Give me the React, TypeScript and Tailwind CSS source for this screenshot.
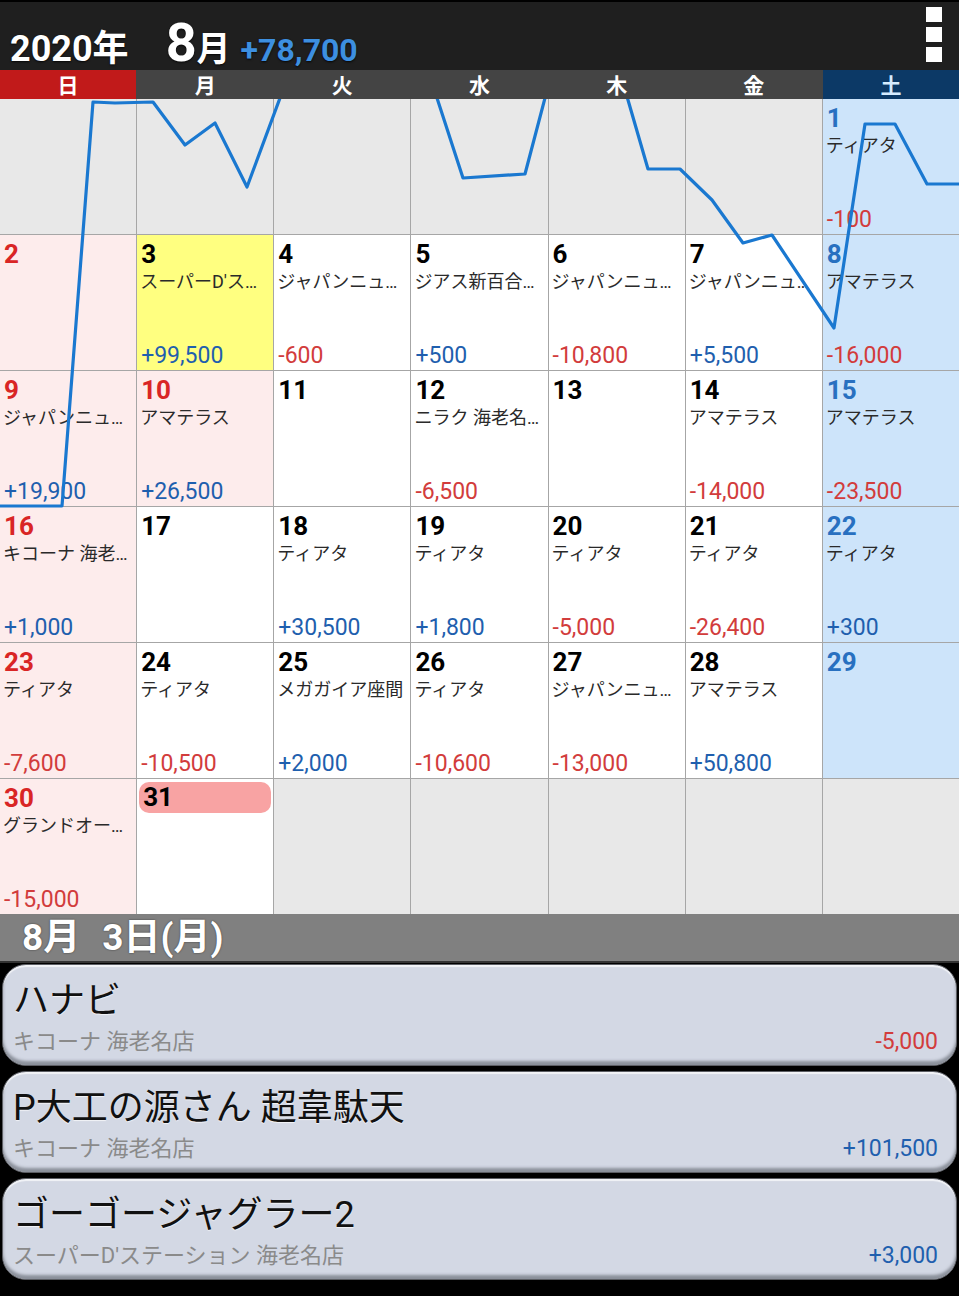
import React from "react";

type Kind = "out" | "sun" | "sat" | "wd" | "today" | "hol";

interface Cell {
  d?: number;
  kind: Kind;
  shop?: string;
  amt?: string;
  badge?: boolean;
}

const rows: Cell[][] = [
  [
    { kind: "out" },
    { kind: "out" },
    { kind: "out" },
    { kind: "out" },
    { kind: "out" },
    { kind: "out" },
    { d: 1, kind: "sat", shop: "ティアタ", amt: "-100" },
  ],
  [
    { d: 2, kind: "sun" },
    { d: 3, kind: "today", shop: "スーパーD'ス…", amt: "+99,500" },
    { d: 4, kind: "wd", shop: "ジャパンニュ…", amt: "-600" },
    { d: 5, kind: "wd", shop: "ジアス新百合…", amt: "+500" },
    { d: 6, kind: "wd", shop: "ジャパンニュ…", amt: "-10,800" },
    { d: 7, kind: "wd", shop: "ジャパンニュ…", amt: "+5,500" },
    { d: 8, kind: "sat", shop: "アマテラス", amt: "-16,000" },
  ],
  [
    { d: 9, kind: "sun", shop: "ジャパンニュ…", amt: "+19,900" },
    { d: 10, kind: "hol", shop: "アマテラス", amt: "+26,500" },
    { d: 11, kind: "wd" },
    { d: 12, kind: "wd", shop: "ニラク 海老名…", amt: "-6,500" },
    { d: 13, kind: "wd" },
    { d: 14, kind: "wd", shop: "アマテラス", amt: "-14,000" },
    { d: 15, kind: "sat", shop: "アマテラス", amt: "-23,500" },
  ],
  [
    { d: 16, kind: "sun", shop: "キコーナ 海老…", amt: "+1,000" },
    { d: 17, kind: "wd" },
    { d: 18, kind: "wd", shop: "ティアタ", amt: "+30,500" },
    { d: 19, kind: "wd", shop: "ティアタ", amt: "+1,800" },
    { d: 20, kind: "wd", shop: "ティアタ", amt: "-5,000" },
    { d: 21, kind: "wd", shop: "ティアタ", amt: "-26,400" },
    { d: 22, kind: "sat", shop: "ティアタ", amt: "+300" },
  ],
  [
    { d: 23, kind: "sun", shop: "ティアタ", amt: "-7,600" },
    { d: 24, kind: "wd", shop: "ティアタ", amt: "-10,500" },
    { d: 25, kind: "wd", shop: "メガガイア座間", amt: "+2,000" },
    { d: 26, kind: "wd", shop: "ティアタ", amt: "-10,600" },
    { d: 27, kind: "wd", shop: "ジャパンニュ…", amt: "-13,000" },
    { d: 28, kind: "wd", shop: "アマテラス", amt: "+50,800" },
    { d: 29, kind: "sat" },
  ],
  [
    { d: 30, kind: "sun", shop: "グランドオー…", amt: "-15,000" },
    { d: 31, kind: "wd", badge: true },
    { kind: "out" },
    { kind: "out" },
    { kind: "out" },
    { kind: "out" },
    { kind: "out" },
  ],
];

const bgOf: Record<Kind, string> = {
  out: "bg-[#e8e8e8]",
  sun: "bg-[#fdecec]",
  hol: "bg-[#fdecec]",
  sat: "bg-[#cde4fa]",
  today: "bg-[#ffff80]",
  wd: "bg-white",
};

const numColor = (k: Kind) =>
  k === "sun" || k === "hol" ? "text-[#d92525]" : k === "sat" ? "text-[#2870c0]" : "text-black";

const amtColor = (a: string) => (a.startsWith("-") ? "text-[#d23c3c]" : "text-[#1f5fae]");

// cumulative line, coords relative to the grid top (page y - 99)
const chart =
  "0,407 62,407 93,3 115,4 153,3 185,46 215,24 247,88 280,-1 300,-60 420,-60 437,-1 463,79 525,75 545,-1 560,-60 610,-60 628,1 648,70 680,70 712,101 743,144 772,136 834,229 865,25 895,25 927,85 959,85";

function DayCell({ c }: { c: Cell }) {
  return (
    <div className={`${bgOf[c.kind]} flex flex-col overflow-hidden`}>
      {c.badge ? (
        <div className="mx-[2px] mt-[3px] h-[31px] rounded-[10px] bg-[#f8a3a3] pl-[4px] pt-[1px] text-[26px] font-bold leading-[29px] text-black">
          {c.d}
        </div>
      ) : (
        c.d !== undefined && (
          <div className={`pl-[4px] pt-[5px] text-[26px] font-bold leading-[29px] ${numColor(c.kind)}`}>{c.d}</div>
        )
      )}
      {c.shop && (
        <div className="mt-[2px] whitespace-nowrap overflow-hidden pl-[3px] text-[18px] leading-[22px] text-[#2a2a2a]">
          {c.shop}
        </div>
      )}
      {c.amt && (
        <div className={`mt-auto pb-[1px] pl-[4px] text-[23px] leading-[26px] ${amtColor(c.amt)}`}>{c.amt}</div>
      )}
    </div>
  );
}

const entries = [
  { title: "ハナビ", shop: "キコーナ 海老名店", amt: "-5,000" },
  { title: "P大工の源さん 超韋駄天", shop: "キコーナ 海老名店", amt: "+101,500" },
  { title: "ゴーゴージャグラー2", shop: "スーパーD'ステーション 海老名店", amt: "+3,000" },
];

const weekdays = ["日", "月", "火", "水", "木", "金", "土"];

export default function App() {
  return (
    <div className="w-[959px] h-[1296px] overflow-hidden bg-black font-['Roboto','Noto_Sans_CJK_JP',sans-serif]">
      {/* header */}
      <div className="h-[70px] bg-[#1f1f1f] border-t-2 border-black flex justify-between">
        <div className="flex items-baseline pl-[10px] pt-[14px] text-white font-bold [text-shadow:0_1px_2px_rgba(0,0,0,0.8)]">
          <span className="text-[36px] leading-none">2020年</span>
          <span className="ml-[37px] text-[54px] leading-none">8</span>
          <span className="text-[34px] leading-none">月</span>
          <span className="ml-[10px] text-[32px] leading-none text-[#3d8fe0]">+78,700</span>
        </div>
        <div className="mr-[17px] mt-[5px] flex flex-col gap-[5px]">
          <div className="w-[16px] h-[15px] bg-white" />
          <div className="w-[16px] h-[15px] bg-white" />
          <div className="w-[16px] h-[15px] bg-white" />
        </div>
      </div>

      {/* weekday row */}
      <div className="h-[29px] grid grid-cols-7 gap-px bg-[#444444]">
        {weekdays.map((w, i) => (
          <div
            key={w}
            className={`flex items-center justify-center pt-[3px] text-[21px] font-bold leading-none ${
              i === 0 ? "bg-[#c11a1a] text-white" : i === 6 ? "bg-[#0c3966] text-[#d6ecff]" : "bg-[#444444] text-white"
            }`}
          >
            {w}
          </div>
        ))}
      </div>

      {/* calendar grid */}
      <div className="relative h-[815px]">
        <div className="grid h-full grid-cols-7 grid-rows-6 gap-px bg-[#a6a6a6]">
          {rows.flat().map((c, i) => (
            <DayCell key={i} c={c} />
          ))}
        </div>
        <svg className="absolute inset-0 pointer-events-none" width="959" height="815" viewBox="0 0 959 815">
          <polyline points={chart} fill="none" stroke="#1a78d0" strokeWidth="3.2" strokeLinejoin="round" />
        </svg>
      </div>

      {/* selected date */}
      <div className="h-[49px] bg-[#808080] border-b-2 border-[#333] flex items-center pl-[22px] text-white font-bold text-[37px] leading-none [text-shadow:0_0_2px_rgba(0,0,0,0.6)]">
        <span>8月</span>
        <span className="ml-[22px]">3日(月)</span>
      </div>

      {/* entries */}
      <div className="flex flex-col gap-[5px] px-[2px] pt-[1px]">
        {entries.map((e) => (
          <div
            key={e.title}
            className="h-[102px] rounded-[24px] border border-[#5c5e64] bg-[#d3d8e4] pl-[10px] pr-[18px] pt-[16px] shadow-[inset_0_-4px_3px_rgba(80,85,95,0.55),inset_0_2px_1px_rgba(255,255,255,0.7)]"
          >
            <div className="text-[36px] leading-[40px] text-[#111] [text-shadow:0_1px_1px_rgba(255,255,255,0.7)]">
              {e.title}
            </div>
            <div className="mt-[8px] flex items-baseline justify-between text-[22px] leading-[26px]">
              <span className="text-[#8a8a8a]">{e.shop}</span>
              <span className={`text-[23px] ${amtColor(e.amt)}`}>{e.amt}</span>
            </div>
          </div>
        ))}
      </div>
    </div>
  );
}
